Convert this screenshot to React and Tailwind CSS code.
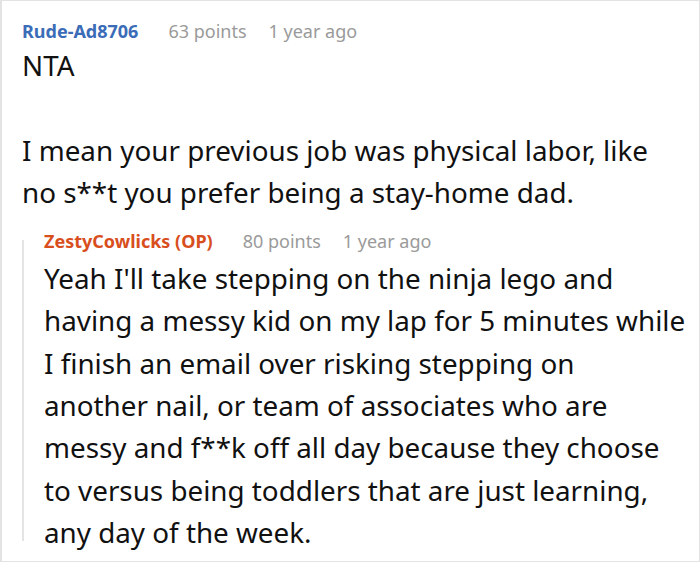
import React from "react";

const comment = {
  author: "Rude-Ad8706",
  points: "63 points",
  time: "1 year ago",
  lines: ["NTA", "", "I mean your previous job was physical labor, like", "no s**t you prefer being a stay-home dad."],
};

const reply = {
  author: "ZestyCowlicks (OP)",
  points: "80 points",
  time: "1 year ago",
  lines: [
    "Yeah I'll take stepping on the ninja lego and",
    "having a messy kid on my lap for 5 minutes while",
    "I finish an email over risking stepping on",
    "another nail, or team of associates who are",
    "messy and f**k off all day because they choose",
    "to versus being toddlers that are just learning,",
    "any day of the week.",
  ],
};

function Meta({ author, points, time, color }) {
  return (
    <div className="flex items-center h-6 text-[18px] leading-6 whitespace-nowrap">
      <span className={`font-bold ${color}`}>{author}</span>
      <span className="ml-[30px] text-[#9a9a9a]">{points}</span>
      <span className="ml-[22px] text-[#9a9a9a]">{time}</span>
    </div>
  );
}

function Body({ lines, className }) {
  return (
    <div className={`text-[27.8px] leading-[42.3px] whitespace-nowrap ${className}`}>
      {lines.map((l, i) => (
        <p key={i} className="h-[42.3px]">{l}</p>
      ))}
    </div>
  );
}

export default function App() {
  return (
    <div
      className="w-[700px] h-[562px] bg-white border border-[#e3e3e3] border-l-2 pl-[20px] pt-[18px] overflow-hidden text-[#111]"
      style={{ fontFamily: '"Noto Sans", "Open Sans", sans-serif' }}
    >
      <Meta {...comment} color="text-[#3a6cb7]" />
      <Body lines={comment.lines} className="mt-[1px]" />

      <div className="flex mt-[16px]">
        <div className="w-[2px] bg-[#e4e4e4] mt-[11px] mb-[12px]" />
        <div className="pl-[20px] pr-2">
          <Meta {...reply} color="text-[#d84e1d]" />
          <Body lines={reply.lines} className="mt-[4px]" />
        </div>
      </div>
    </div>
  );
}
